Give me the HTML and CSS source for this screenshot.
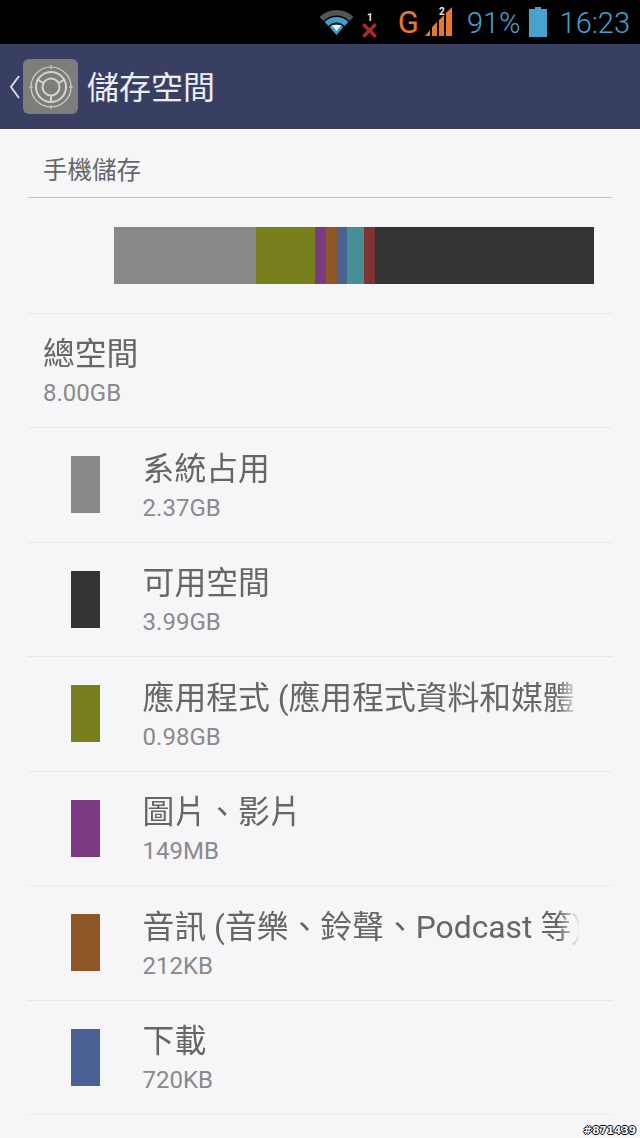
FILE: index.html
```html
<!DOCTYPE html>
<html lang="zh-Hant">
  <head>
    <meta charset="UTF-8" />
    <meta name="viewport" content="width=device-width, initial-scale=1.0" />
    <title>儲存空間</title>
    <link rel="stylesheet" href="styles.css">
  </head>
  <body>
    <div class="status_bar">
      <svg class="icon_wifi" width="37" height="30" viewBox="0 0 36 30">
        <path d="M1 10 A24 24 0 0 1 35 10 L31 14 A18 18 0 0 0 5 14 Z" fill="#555"/>
        <path d="M6 15 A17 17 0 0 1 30 15 L26 19 A11 11 0 0 0 10 19 Z" fill="#3f9fc9"/>
        <path d="M11 20 A10 10 0 0 1 25 20 L18 28 Z" fill="#3f9fc9"/>
        <path d="M13 18 H23 L18 24 Z" fill="#e8f4fa"/>
      </svg>
      <div class="sim_one">
        <span class="sim_no">1</span>
        <svg width="17" height="17" viewBox="0 0 15 15">
          <path d="M2 2 L13 13 M13 2 L2 13" stroke="#b3262a" stroke-width="3"/>
        </svg>
      </div>
      <span class="net_type">G</span>
      <div class="signal">
        <svg width="30" height="30" viewBox="0 0 30 30">
          <path d="M1 29 L6 23 V29 Z M8 29 V20 L13 15 V29 Z M15 29 V13 L20 8 V29 Z M22 29 V6 L28 0 V29 Z" fill="#e8772a"/>
        </svg>
        <span class="sim_no sim_two">2</span>
      </div>
      <span class="status_text pct">91%</span>
      <svg class="icon_batt" width="18" height="30" viewBox="0 0 18 30">
        <path d="M6 0 H12 V2 H18 V30 H0 V2 H6 Z" fill="#45a3cd"/>
      </svg>
      <span class="status_text">16:23</span>
    </div>

    <div class="action_bar">
      <svg class="back" width="12" height="26" viewBox="0 0 12 26">
        <path d="M10 2 L2 13 L10 24" fill="none" stroke="#dfe2ea" stroke-width="1.8"/>
      </svg>
      <div class="app_icon">
        <svg width="44" height="44" viewBox="0 0 44 44" fill="none" stroke="#d4d3cf">
          <circle cx="22" cy="22" r="20" stroke-width="1.2"/>
          <circle cx="22" cy="22" r="15" stroke-width="2"/>
          <circle cx="22" cy="22" r="8.5" stroke-width="2"/>
          <path d="M22 31 V37 M14 18 L8 14 M30 18 L36 14" stroke-width="2"/>
          <path d="M22 0 V4 M22 40 V44 M0 22 H4 M40 22 H44" stroke-width="1"/>
        </svg>
      </div>
      <h1 class="title">儲存空間</h1>
    </div>

    <div class="content">
      <div class="section_head">手機儲存</div>

      <div class="bar_row">
        <div class="usage_bar">
          <div class="seg c_system w_system"></div>
          <div class="seg c_apps w_apps"></div>
          <div class="seg c_photo w_small"></div>
          <div class="seg c_audio w_small"></div>
          <div class="seg c_down w_small"></div>
          <div class="seg c_teal w_teal"></div>
          <div class="seg c_red w_small"></div>
          <div class="seg c_free w_free"></div>
        </div>
      </div>

      <div class="row total">
        <div class="text">
          <div class="name">總空間</div>
          <div class="size">8.00GB</div>
        </div>
      </div>

      <div class="row">
        <div class="swatch c_system"></div>
        <div class="text">
          <div class="name">系統占用</div>
          <div class="size">2.37GB</div>
        </div>
      </div>
      <div class="row">
        <div class="swatch c_free"></div>
        <div class="text">
          <div class="name">可用空間</div>
          <div class="size">3.99GB</div>
        </div>
      </div>
      <div class="row">
        <div class="swatch c_apps"></div>
        <div class="text">
          <div class="name">應用程式 (應用程式資料和媒體</div>
          <div class="size">0.98GB</div>
        </div>
      </div>
      <div class="row">
        <div class="swatch c_photo"></div>
        <div class="text">
          <div class="name">圖片、影片</div>
          <div class="size">149MB</div>
        </div>
      </div>
      <div class="row">
        <div class="swatch c_audio"></div>
        <div class="text">
          <div class="name">音訊 (音樂、鈴聲、Podcast 等)</div>
          <div class="size">212KB</div>
        </div>
      </div>
      <div class="row">
        <div class="swatch c_down"></div>
        <div class="text">
          <div class="name">下載</div>
          <div class="size">720KB</div>
        </div>
      </div>
    </div>

    <div class="stamp">#871439</div>
  </body>
</html>
```
FILE: styles.css
```css
* {
  margin: 0;
  padding: 0;
  box-sizing: border-box;
}
html,
body {
  height: 1138px;
  overflow: hidden;
}
body {
  position: relative;
  font-family: Roboto, "Noto Sans CJK JP", sans-serif;
  background-color: #f6f6f9;
  color: #666;
}

.status_bar {
  display: flex;
  align-items: center;
  justify-content: flex-end;
  height: 44px;
  padding-right: 10px;
  background-color: #000;
}
.icon_wifi {
  margin-right: 6px;
}
.sim_one {
  display: flex;
  flex-direction: column;
  align-items: center;
  width: 18px;
  margin-right: 19px;
  padding-top: 8px;
}
.sim_no {
  font-size: 10px;
  line-height: 9px;
  font-weight: 700;
  color: #eee;
}
.net_type {
  font-size: 31px;
  color: #e8772a;
  margin-right: 5px;
}
.signal {
  position: relative;
  width: 30px;
  height: 30px;
  margin-right: 13px;
}
.sim_two {
  position: absolute;
  top: 0;
  left: 15px;
}
.status_text {
  font-size: 29px;
  font-weight: 300;
  color: #45a3cd;
  padding-top: 1px;
}
.pct {
  margin-right: 8px;
}
.icon_batt {
  margin-right: 13px;
}

.action_bar {
  display: flex;
  align-items: center;
  height: 85px;
  padding-left: 9px;
  background-color: #383f63;
}
.back {
  margin-right: 2px;
}
.app_icon {
  display: flex;
  align-items: center;
  justify-content: center;
  width: 55px;
  height: 55px;
  margin-right: 9px;
  border-radius: 6px;
  background-color: #7d7d7b;
}
.title {
  font-size: 32px;
  font-weight: 400;
  color: #eceef4;
  padding-bottom: 4px;
}

.content {
  padding: 0 28px;
}
.section_head {
  height: 69px;
  padding: 25px 0 0 15px;
  font-size: 24.5px;
  line-height: 34px;
  border-bottom: 1px solid #c4c4c6;
}

.bar_row {
  height: 115.6px;
  padding: 29px 18px 0 86px;
  border-bottom: 1px solid #e9e9ec;
}
.usage_bar {
  display: flex;
  height: 57px;
}
.w_system {
  width: 142px;
}
.w_apps {
  width: 59px;
}
.w_small {
  width: 10.8px;
}
.w_teal {
  width: 17px;
}
.w_free {
  flex: 1;
}

.c_system {
  background-color: #888;
}
.c_free {
  background-color: #333;
}
.c_apps {
  background-color: #78801e;
}
.c_photo {
  background-color: #7b3b82;
}
.c_audio {
  background-color: #8f5628;
}
.c_down {
  background-color: #4a6196;
}
.c_teal {
  background-color: #478f92;
}
.c_red {
  background-color: #803333;
}

.row {
  display: flex;
  align-items: center;
  height: 114.5px;
  border-bottom: 1px solid #e9e9ec;
}
.swatch {
  flex: none;
  width: 29px;
  height: 57px;
  margin-left: 43px;
  margin-right: 42.6px;
}
.text {
  width: 441.4px;
  padding-top: 2px;
}
.total .text {
  padding-left: 15px;
}
.name {
  font-size: 31.8px;
  line-height: 43px;
  margin-bottom: 1px;
  white-space: nowrap;
  -webkit-mask-image: linear-gradient(to right, #000 94%, transparent 99%);
  mask-image: linear-gradient(to right, #000 94%, transparent 99%);
}
.size {
  font-size: 24px;
  line-height: 32px;
  color: #8a8a8a;
}

.stamp {
  position: absolute;
  right: 4px;
  bottom: 1px;
  font-family: "DejaVu Sans", sans-serif;
  font-size: 10.5px;
  font-weight: 700;
  line-height: 13px;
  color: #fff;
  text-shadow: 1px 0 0 #000, -1px 0 0 #000, 0 1px 0 #000, 0 -1px 0 #000;
}
```
